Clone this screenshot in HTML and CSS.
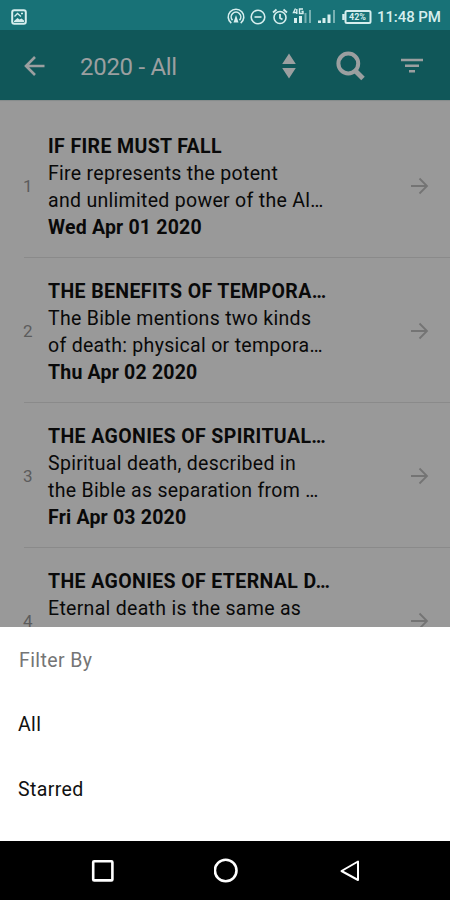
FILE: index.html
```html
<!DOCTYPE html>
<html lang="en">
<head>
  <meta charset="UTF-8">
  <meta name="viewport" content="width=device-width, initial-scale=1.0">
  <title>2020 - All</title>
  <link rel="stylesheet" href="styles.css">
</head>
<body>

  <div class="status">
    <svg class="status-photo" width="16" height="16" viewBox="0 0 16 16" fill="none" stroke="currentColor">
      <rect x="1.2" y="1.2" width="13.6" height="13.6" rx="2" stroke-width="2"/>
      <path d="M3 13v-1l3.500-3 2 1.500 2-1 2.500 2v1.500z" fill="currentColor" stroke="none"/>
      <path d="M3.500 7.500l3-3 3.500 3M10 4.500h2" stroke-width="1.300"/>
    </svg>
    <div class="status-icons">
      <svg width="213" height="20" viewBox="0 0 213 20" fill="none" stroke="currentColor" stroke-width="1.6">
        <!-- hotspot -->
        <path d="M5.300 16.200a7.800 7.800 0 1 1 9.400 0M6.500 13.200a4.800 4.800 0 1 1 7 0"/>
        <path d="M10 8l2.500 7.500h-5z" fill="currentColor" stroke="none"/>
        <!-- do not disturb -->
        <circle cx="32" cy="10" r="6.800"/>
        <path d="M28.500 10h7"/>
        <!-- alarm -->
        <circle cx="54" cy="10.500" r="6"/>
        <path d="M54 7v4l2.500 1.500M47 5.500l3.500-3M61 5.500l-3.500-3" stroke-width="1.800"/>
        <!-- signal 1 -->
        <path d="M69.500 1.500l-2 4h4M70.800 2v5M77 2h-3.500v4.500h3.500v-2h-1.500" stroke-width="1.400"/>
        <path d="M69.500 11v5M74.500 9v7" stroke-width="3"/>
        <path d="M79.500 6v10M84 3v13" stroke-width="2" opacity=".5"/>
        <!-- signal 2 -->
        <path d="M93.500 13.500v2.500M98 11v5M103 7.500v8.500" stroke-width="3"/>
        <path d="M108 3v13" stroke-width="2" opacity=".5"/>
        <!-- battery -->
        <rect x="119.500" y="4" width="25" height="12" rx="1.500" stroke-width="2"/>
        <path d="M117.500 7v6" stroke-width="2.500"/>
      </svg>
      <span class="battery">42%</span>
      <span class="clock">11:48 PM</span>
    </div>
  </div>

  <div class="toolbar">
    <svg class="back" width="22" height="22" viewBox="0 0 22 22" fill="none" stroke="currentColor" stroke-width="2.600">
      <path d="M20.500 11H2.500M11 2l-9 9 9 9"/>
    </svg>
    <h1>2020 - All</h1>
    <svg class="sort" width="14" height="26" viewBox="0 0 14 26" fill="currentColor">
      <path d="M7 .500L13.800 11H.200zM.200 15h13.600L7 25.500z"/>
    </svg>
    <svg class="search" width="30" height="30" viewBox="0 0 30 30" fill="none" stroke="currentColor">
      <circle cx="12.300" cy="12.500" r="9.900" stroke-width="4"/>
      <path d="M19 19.500l8 8" stroke-width="5"/>
    </svg>
    <svg class="filter" width="22" height="16" viewBox="0 0 22 16" fill="none" stroke="currentColor" stroke-width="2.600">
      <path d="M0 2h22M4 7.700h14M8 13.300h6"/>
    </svg>
  </div>

  <div class="list">
    <div class="row">
      <span class="num">1</span>
      <div class="text">
        <b class="title">IF FIRE MUST FALL</b>
        <p>Fire represents the potent<br>and unlimited power of the Al…</p>
        <b class="date">Wed Apr 01 2020</b>
      </div>
      <svg class="arrow" width="18" height="18" viewBox="0 0 18 18"><path d="M0 9h16M8.500 1.500L16 9l-7.500 7.500"/></svg>
    </div>
    <div class="row">
      <span class="num">2</span>
      <div class="text">
        <b class="title">THE BENEFITS OF TEMPORA…</b>
        <p>The Bible mentions two kinds<br>of death: physical or tempora…</p>
        <b class="date">Thu Apr 02 2020</b>
      </div>
      <svg class="arrow" width="18" height="18" viewBox="0 0 18 18"><path d="M0 9h16M8.500 1.500L16 9l-7.500 7.500"/></svg>
    </div>
    <div class="row">
      <span class="num">3</span>
      <div class="text">
        <b class="title">THE AGONIES OF SPIRITUAL…</b>
        <p>Spiritual death, described in<br>the Bible as separation from …</p>
        <b class="date">Fri Apr 03 2020</b>
      </div>
      <svg class="arrow" width="18" height="18" viewBox="0 0 18 18"><path d="M0 9h16M8.500 1.500L16 9l-7.500 7.500"/></svg>
    </div>
    <div class="row">
      <span class="num">4</span>
      <div class="text">
        <b class="title">THE AGONIES OF ETERNAL D…</b>
        <p>Eternal death is the same as</p>
      </div>
      <svg class="arrow" width="18" height="18" viewBox="0 0 18 18"><path d="M0 9h16M8.500 1.500L16 9l-7.500 7.500"/></svg>
    </div>
  </div>

  <div class="sheet">
    <div class="sheet-title">Filter By</div>
    <div class="option">All</div>
    <div class="option">Starred</div>
  </div>

  <div class="nav">
    <svg width="24" height="24" viewBox="0 0 24 24"><rect x="2.200" y="2.200" width="19.200" height="19.200" rx="1"/></svg>
    <svg width="26" height="26" viewBox="0 0 26 26"><circle cx="11.700" cy="12.500" r="10.800"/></svg>
    <svg width="24" height="24" viewBox="0 0 24 24"><path d="M20 2.500v18.500L3.500 12z" stroke-width="2"/></svg>
  </div>

</body>
</html>
```
FILE: styles.css
```css
* {
  box-sizing: border-box;
}

body {
  margin: 0;
  height: 900px;
  display: flex;
  flex-direction: column;
  overflow: hidden;
  background: #999;
  color: #090909;
  font-family: Roboto, sans-serif;
}

svg {
  display: block;
  flex: none;
}

/* status bar */
.status {
  height: 30px;
  flex: none;
  display: flex;
  align-items: center;
  justify-content: space-between;
  padding: 3px 0 0 11px;
  background: #187277;
  color: #d6eeee;
}

.status-icons {
  position: relative;
  width: 224px;
}

.battery {
  position: absolute;
  left: 123px;
  top: 4px;
  font-size: 9px;
  line-height: 12px;
  font-weight: bold;
}

.clock {
  position: absolute;
  left: 151px;
  top: 0;
  font-size: 15px;
  line-height: 20px;
  font-weight: 500;
  letter-spacing: -0.1px;
  white-space: nowrap;
}

/* toolbar */
.toolbar {
  height: 70px;
  flex: none;
  display: flex;
  align-items: center;
  padding: 2px 27px 0 24px;
  background: #105759;
  color: #9b9fa0;
}

.toolbar h1 {
  margin: 2px auto 0 34px;
  font-size: 24px;
  line-height: 30px;
  font-weight: 400;
  letter-spacing: -0.3px;
}

.search {
  margin: 0 35px 0 40px;
}

/* list */
.list {
  flex: 1;
  min-height: 0;
  overflow: hidden;
  padding-top: 13px;
  box-shadow: inset 0 2px 1px -1px #858b8b;
}

.row {
  height: 145px;
  margin-left: 24px;
  padding: 20px 21px 0 0;
  display: flex;
  border-bottom: 1px solid #8a8a8a;
}

.num {
  width: 24px;
  padding-top: 40px;
  margin-left: -1px;
  margin-right: 1px;
  font-size: 17px;
  line-height: 27px;
  color: #5c5c5c;
}

.text {
  flex: 1;
  font-size: 19.5px;
  line-height: 27px;
  white-space: nowrap;
}

.text p {
  margin: 0;
  letter-spacing: 0.3px;
}

.title,
.date {
  display: block;
}

.title {
  letter-spacing: 0.38px;
}

.date {
  letter-spacing: 0.2px;
}

.arrow {
  margin-top: 44px;
  fill: none;
  stroke: #747474;
  stroke-width: 1.8;
}

/* bottom sheet */
.sheet {
  height: 214px;
  flex: none;
  background: #fff;
  font-size: 19.5px;
  letter-spacing: 0.4px;
}

.sheet-title {
  height: 65px;
  line-height: 67px;
  padding-left: 19px;
  color: #757575;
}

.option {
  height: 65px;
  line-height: 66px;
  padding-left: 18px;
  color: #111;
}

/* navigation bar */
.nav {
  height: 59px;
  flex: none;
  display: flex;
  align-items: center;
  justify-content: space-between;
  padding: 0 88px 0 91px;
  background: #000;
}

.nav svg {
  fill: none;
  stroke: #fff;
  stroke-width: 2.6;
  stroke-linejoin: round;
}
```
